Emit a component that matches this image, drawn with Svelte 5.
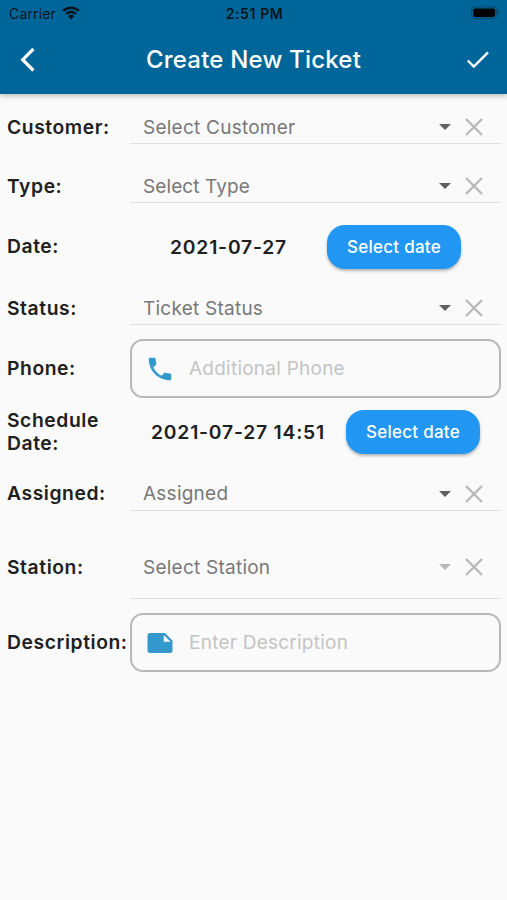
<script>
  const rows = [
    { id: "customer", label: "Customer:", type: "select", text: "Select Customer" },
    { id: "type", label: "Type:", type: "select", text: "Select Type" },
    { id: "date", label: "Date:", type: "date", text: "2021-07-27" },
    { id: "status", label: "Status:", type: "select", text: "Ticket Status" },
    { id: "phone", label: "Phone:", type: "input", text: "Additional Phone" },
    { id: "schedule", label: "Schedule Date:", type: "date", text: "2021-07-27 14:51" },
    { id: "assigned", label: "Assigned:", type: "select", text: "Assigned" },
    { id: "station", label: "Station:", type: "select", text: "Select Station", disabled: true },
    { id: "description", label: "Description:", type: "input", text: "Enter Description" },
  ];

  const icons = {
    phone:
      "M6.62 10.79c1.44 2.83 3.76 5.14 6.59 6.59l2.2-2.2c.27-.27.67-.36 1.02-.24 1.12.37 2.33.57 3.57.57.55 0 1 .45 1 1V20c0 .55-.45 1-1 1-9.39 0-17-7.61-17-17 0-.55.45-1 1-1h3.5c.55 0 1 .45 1 1 0 1.25.2 2.45.57 3.57.11.35.03.74-.25 1.02l-2.2 2.2z",
    description:
      "M22 10l-6-6H4c-1.1 0-2 .9-2 2v12.01c0 1.1.9 1.99 2 1.99h16c1.1 0 2-.9 2-2v-8zm-7-4.5l5.5 5.5H15V5.5z",
  };

  let values = { phone: "", description: "" };
</script>

<div class="screen">
  <header>
    <div class="status-bar">
      <div class="carrier">
        <span>Carrier</span>
        <svg width="18" height="14" viewBox="0 0 18 14">
          <path d="M1.2 4.9a11.2 11.2 0 0 1 15.6 0M4 8a7.2 7.2 0 0 1 10 0" />
          <path class="dot" d="M5.9 10.2a4.6 4.6 0 0 1 6.2 0L9 13.5z" />
        </svg>
      </div>
      <span class="time">2:51 PM</span>
      <svg class="battery" width="29" height="14" viewBox="0 0 29 14">
        <rect class="shell" x="0.7" y="0.9" width="25" height="11.8" rx="3.6" />
        <rect x="2.3" y="2.5" width="21.8" height="8.6" rx="2" />
        <path class="cap" d="M27 4.8q1.5.8 1.5 2t-1.5 2z" />
      </svg>
    </div>
    <div class="app-bar">
      <button class="icon-button" aria-label="Back">
        <svg width="30" height="30" viewBox="0 0 30 30">
          <path d="M21.4 4L10.700 14.700l10.700 10.800" stroke-width="3.200" />
        </svg>
      </button>
      <h1>Create New Ticket</h1>
      <button class="icon-button" aria-label="Save">
        <svg width="30" height="30" viewBox="0 0 30 30">
          <path d="M4.800 15.500l6 6L25 7.300" stroke-width="2.400" />
        </svg>
      </button>
    </div>
  </header>

  <form>
    {#each rows as row}
      <div class={`row ${row.id}`}>
        <label for={row.id}>{row.label}</label>
        {#if row.type === "select"}
          <div class="select" class:disabled={row.disabled} id={row.id}>
            <span class="hint">{row.text}</span>
            <svg class="arrow" width="12" height="6" viewBox="0 0 12 6">
              <path d="M0 0h12L6 6z" />
            </svg>
            <svg class="clear" width="18" height="18" viewBox="0 0 18 18">
              <path d="M1 1l16 16M17 1L1 17" />
            </svg>
          </div>
        {:else if row.type === "date"}
          <div class="picker" id={row.id}>
            <span>{row.text}</span>
            <button type="button">Select date</button>
          </div>
        {:else}
          <div class="field">
            <svg width="30" height="30" viewBox="0 0 24 24">
              <path d={icons[row.id]} />
            </svg>
            <input id={row.id} type="text" placeholder={row.text} bind:value={values[row.id]} />
          </div>
        {/if}
      </div>
    {/each}
  </form>
</div>

<style>
  :global(body) {
    background-color: #fafafa;
  }

  .screen {
    min-height: 900px;
    background-color: #fafafa;
    color: #202020;
    font-family: Inter, "Liberation Sans", sans-serif;
    font-size: 19px;
  }

  header {
    height: 94px;
    background-color: #006699;
    box-shadow: 0 2px 5px rgba(0, 0, 0, 0.25);
  }

  .status-bar {
    display: grid;
    grid-template-columns: 1fr auto 1fr;
    align-items: center;
    height: 26px;
    padding: 0 7px 0 9px;
    box-sizing: border-box;
    color: #04151f;
    font-size: 14px;
  }

  .carrier {
    display: flex;
    align-items: center;
    gap: 6px;
    letter-spacing: 0.15px;
  }

  .carrier path {
    fill: none;
    stroke: #04151f;
    stroke-width: 2.4;
  }

  .carrier .dot {
    fill: #04151f;
    stroke: none;
  }

  .time {
    font-weight: 600;
    letter-spacing: 0.6px;
  }

  .battery {
    justify-self: end;
  }

  .battery .shell {
    fill: none;
    stroke: #034c70;
    stroke-width: 1.2;
  }

  .battery .cap {
    fill: #034c70;
  }

  .app-bar {
    display: flex;
    align-items: center;
    justify-content: space-between;
    height: 68px;
    padding: 0 14px 0 12px;
  }

  h1 {
    margin: -1px 0 0 2px;
    color: #fff;
    font-size: 24px;
    font-weight: 500;
    letter-spacing: 0.2px;
  }

  .icon-button {
    display: flex;
    padding: 0;
    border: none;
    background: none;
    cursor: pointer;
  }

  .icon-button path {
    fill: none;
    stroke: #fff;
  }

  form {
    padding: 3px 6px 0 7px;
  }

  .row {
    display: grid;
    grid-template-columns: 123px 1fr;
    align-items: center;
    height: 60px;
  }

  .row.type {
    height: 58px;
  }

  .row.date {
    height: 63px;
  }

  .row.phone {
    height: 61px;
  }

  .row.schedule {
    height: 66px;
  }

  .row.assigned {
    height: 57px;
  }

  .row.station {
    height: 90px;
  }

  .row.description {
    height: 61px;
  }

  label {
    font-size: 19.3px;
    font-weight: 600;
    line-height: 23px;
    letter-spacing: 0.58px;
    white-space: pre-wrap;
  }

  .select {
    display: flex;
    align-items: center;
    height: 34px;
    padding: 1px 18px 0 13px;
    border-bottom: 1px solid #e0e0e0;
    box-sizing: border-box;
  }

  .hint {
    flex: 1;
    color: #787878;
    letter-spacing: 0.24px;
  }

  .type .hint {
    letter-spacing: 0.1px;
  }

  .arrow {
    margin-right: 14px;
    fill: #606060;
  }

  .clear {
    fill: none;
    stroke: #b8b8b8;
    stroke-width: 2.3;
  }

  .disabled .arrow {
    fill: #b8b8b8;
  }

  .station .select {
    height: 63px;
  }

  .picker {
    display: flex;
    align-items: center;
    justify-content: space-evenly;
    font-size: 19.3px;
    font-weight: 600;
    letter-spacing: 0.8px;
  }

  .picker button {
    width: 134px;
    height: 44px;
    padding: 0;
    border: none;
    border-radius: 18px;
    background-color: #2196f3;
    box-shadow: 0 2px 3px rgba(0, 0, 0, 0.28);
    color: #fff;
    font-family: inherit;
    font-size: 17px;
    font-weight: 500;
    letter-spacing: 0.25px;
    cursor: pointer;
  }

  .field {
    display: flex;
    align-items: center;
    height: 59px;
    padding: 0 13px;
    border: 2px solid #b8b8b8;
    border-radius: 13px;
    box-sizing: border-box;
  }

  .field svg {
    flex: none;
    fill: #3399cc;
  }

  input {
    flex: 1;
    min-width: 0;
    padding: 0;
    margin-left: 14px;
    border: none;
    outline: none;
    background: none;
    font-family: inherit;
    font-size: 19px;
    letter-spacing: 0.24px;
  }

  input::placeholder {
    color: #c4c4c4;
  }
</style>
